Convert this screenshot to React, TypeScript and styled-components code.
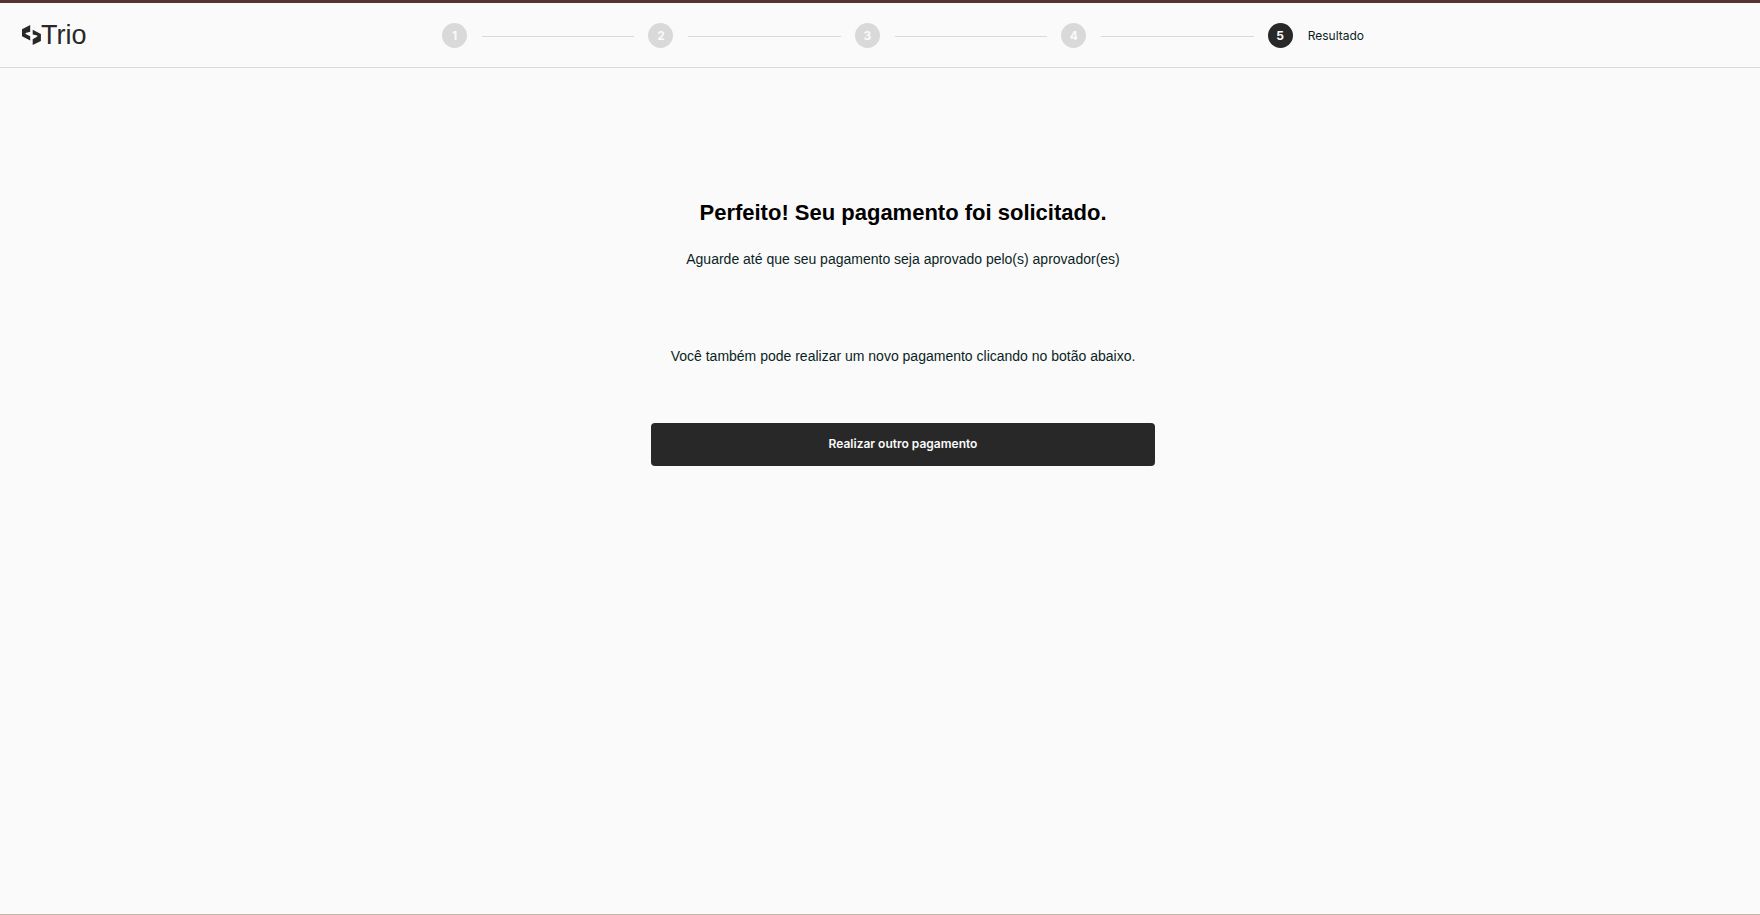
import React from "react";
import styled, { createGlobalStyle } from "styled-components";

const GlobalStyle = createGlobalStyle`
  *, *::before, *::after { box-sizing: border-box; }
  body {
    margin: 0;
    background: #fafafa;
    color: #0a1f24;
    font-family: "Liberation Sans", Arial, sans-serif;
  }
`;

const Page = styled.div`
  display: flex;
  flex-direction: column;
  min-height: 100vh;
  border-top: 3px solid #543332;
  border-bottom: 1px solid #c1b8a2;
`;

const Header = styled.header`
  display: grid;
  grid-template-columns: 64px 1fr;
  align-items: center;
  height: 65px;
  padding: 0 40px 0 22px;
  border-bottom: 1px solid #d9d9d9;
`;

const Brand = styled.a`
  display: flex;
  align-items: center;
  color: #282828;
  font-size: 27px;
  line-height: 32px;
  text-decoration: none;
`;

const Mark = styled.svg`
  flex: none;
  width: 19px;
  height: 20px;
`;

const Steps = styled.ol`
  display: flex;
  align-items: center;
  gap: 14px;
  width: 100%;
  max-width: 922px;
  margin: 0 auto;
  padding: 0;
  list-style: none;
  font-family: Inter, sans-serif;
  font-size: 12px;
  line-height: 16px;
`;

const Step = styled.li<{ $last?: boolean }>`
  display: flex;
  flex: ${(p) => (p.$last ? "none" : "1")};
  align-items: center;
  gap: 15px;
`;

const Circle = styled.span<{ $active?: boolean }>`
  display: flex;
  flex: none;
  align-items: center;
  justify-content: center;
  width: 25px;
  height: 25px;
  padding-top: 2px;
  border-radius: 50%;
  background: ${(p) => (p.$active ? "#282828" : "#d9d9d9")};
  color: #fafafa;
  font-weight: 700;
`;

const StepLabel = styled.span`
  padding-top: 2px;
`;

const Connector = styled.span`
  flex: 1;
  height: 3px;
  border-bottom: 1px solid #d9d9d9;
`;

const Main = styled.main`
  display: flex;
  flex-direction: column;
  align-items: center;
  padding: 129px 0 40px 46px;
  text-align: center;
`;

const Title = styled.h1`
  margin: 0 0 20px;
  color: #000;
  font-size: 22px;
  line-height: 32px;
`;

const Text = styled.p`
  margin: 0;
  font-size: 14px;
  line-height: 20px;
`;

const Again = styled.section`
  display: flex;
  flex-direction: column;
  gap: 57px;
  width: 100%;
  max-width: 504px;
  margin-top: 77px;
`;

const Button = styled.button`
  width: 100%;
  height: 43px;
  padding-bottom: 3px;
  border: 0;
  border-radius: 4px;
  background: #282828;
  color: #fafafa;
  font-family: Inter, sans-serif;
  font-size: 12px;
  font-weight: 600;
  cursor: pointer;
`;

export default function App() {
  return (
    <Page>
      <GlobalStyle />
      <Header>
        <Brand href="#">
          <Mark viewBox="0 0 19 20" aria-hidden="true" fill="currentColor">
            <path d="M8.200 0 0 4.300V11.200l8.200 4.300v-4.300L3.600 8.900v-.8L8.200 6.800z" />
            <path d="m10.700 4.700 8.200 4.200v7.100L10.700 20v-5.800l4.600-2.800v-.8L10.700 9.400z" />
          </Mark>
          Trio
        </Brand>
        <Steps>
          {[1, 2, 3, 4].map((n) => (
            <Step key={n}>
              <Circle>{n}</Circle>
              <Connector />
            </Step>
          ))}
          <Step $last aria-current="step">
            <Circle $active>5</Circle>
            <StepLabel>Resultado</StepLabel>
          </Step>
        </Steps>
      </Header>
      <Main>
        <Title>Perfeito! Seu pagamento foi solicitado.</Title>
        <Text>Aguarde até que seu pagamento seja aprovado pelo(s) aprovador(es)</Text>
        <Again>
          <Text>Você também pode realizar um novo pagamento clicando no botão abaixo.</Text>
          <Button type="button">Realizar outro pagamento</Button>
        </Again>
      </Main>
    </Page>
  );
}
